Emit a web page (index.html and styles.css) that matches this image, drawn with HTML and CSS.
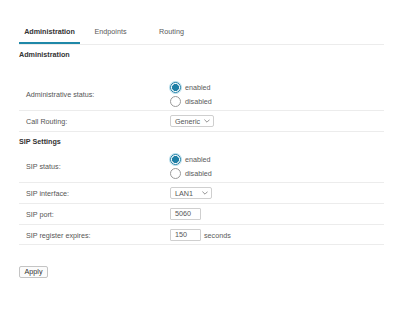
FILE: index.html
```html
<!DOCTYPE html>
<html>
<head>
<meta charset="utf-8">
<link rel="stylesheet" href="styles.css">
</head>
<body>
<div class="page">
  <div class="tabs">
    <div class="tab tab--active">Administration</div>
    <div class="tab">Endpoints</div>
    <div class="tab">Routing</div>
  </div>

  <div class="section-title section-title--spaced">Administration</div>
  <div class="row row--radios">
    <div class="label">Administrative status:</div>
    <div class="radio-group">
      <label class="radio-item"><span class="radio radio--checked"></span>enabled</label>
      <label class="radio-item"><span class="radio"></span>disabled</label>
    </div>
  </div>
  <div class="row">
    <div class="label">Call Routing:</div>
    <div class="controls">
      <div class="select select--generic"><span>Generic</span><svg class="chev" width="6" height="4" viewBox="0 0 6 4"><path d="M0.4 0.6 L3 3.2 L5.6 0.6" fill="none" stroke="#777" stroke-width="0.8"/></svg></div>
    </div>
  </div>

  <div class="section-title">SIP Settings</div>
  <div class="row row--radios">
    <div class="label">SIP status:</div>
    <div class="radio-group">
      <label class="radio-item"><span class="radio radio--checked"></span>enabled</label>
      <label class="radio-item"><span class="radio"></span>disabled</label>
    </div>
  </div>
  <div class="row">
    <div class="label">SIP interface:</div>
    <div class="controls">
      <div class="select select--lan"><span>LAN1</span><svg class="chev" width="6" height="4" viewBox="0 0 6 4"><path d="M0.4 0.6 L3 3.2 L5.6 0.6" fill="none" stroke="#777" stroke-width="0.8"/></svg></div>
    </div>
  </div>
  <div class="row">
    <div class="label">SIP port:</div>
    <div class="controls"><div class="field">5060</div></div>
  </div>
  <div class="row row--last">
    <div class="label">SIP register expires:</div>
    <div class="controls"><div class="field">150</div><span class="unit">seconds</span></div>
  </div>

  <div class="actions"><div class="button">Apply</div></div>
</div>
</body>
</html>
```
FILE: styles.css
```css
html, body {
  margin: 0;
  padding: 0;
  background: #ffffff;
}
body {
  font-family: "Liberation Sans", Arial, sans-serif;
  font-size: 7.2px;
  color: #555;
}
.page {
  width: 365px;
  padding: 20px 0 0 19px;
}
.tabs {
  display: flex;
  border-bottom: 1px solid #ececec;
}
.tab {
  width: 61px;
  text-align: center;
  padding-top: 2px;
  line-height: 20px;
  border-bottom: 2px solid transparent;
  color: #5a5a5a;
}
.tab--active {
  font-weight: bold;
  color: #333;
  border-bottom-color: #1f88a8;
}
.section-title {
  font-weight: bold;
  color: #333;
  line-height: 10px;
  margin: 5px 0 1px;
}
.section-title--spaced {
  margin-bottom: 16px;
}
.row {
  display: grid;
  grid-template-columns: 151px 1fr;
  align-items: center;
  padding: 4px 0;
  border-bottom: 1px solid #ececec;
}
.row--radios {
  padding: 4px 0 2px;
}
.row--last {
  padding-bottom: 3px;
}
.label {
  padding-left: 7px;
  color: #555;
}
.radio-group {
  display: flex;
  flex-direction: column;
}
.radio-item {
  display: flex;
  align-items: center;
  height: 14px;
  gap: 4px;
  color: #5a5a5a;
}
.radio {
  box-sizing: border-box;
  width: 11px;
  height: 11px;
  border-radius: 50%;
  border: 1px solid #9a9a9a;
  background: #fff;
}
.radio--checked {
  border: 1px solid #1f7fa6;
  background: radial-gradient(circle, #1f7fa6 0, #1f7fa6 3.2px, #ffffff 3.8px);
  box-shadow: 0 0 0 1px #b5dcea;
}
.controls {
  display: flex;
  align-items: center;
  height: 12px;
}
.select {
  box-sizing: border-box;
  height: 12px;
  border: 1px solid #cfcfcf;
  border-radius: 2px;
  display: flex;
  align-items: center;
  justify-content: space-between;
  padding: 0 3px 0 4px;
  color: #555;
  background: #fff;
}
.select--generic {
  width: 44px;
}
.select--lan {
  width: 42px;
}
.chev {
  display: block;
}
.field {
  box-sizing: border-box;
  width: 31px;
  height: 12px;
  line-height: 10px;
  border: 1px solid #cfcfcf;
  border-radius: 1px;
  padding: 0 4px;
  color: #555;
  background: #fff;
}
.unit {
  margin-left: 3px;
  color: #5a5a5a;
}
.actions {
  margin-top: 21px;
}
.button {
  box-sizing: border-box;
  display: inline-block;
  width: 29px;
  height: 12px;
  line-height: 10px;
  text-align: center;
  border: 1px solid #c4c4c4;
  border-radius: 2px;
  color: #333;
  background: #fbfbfb;
}
```
